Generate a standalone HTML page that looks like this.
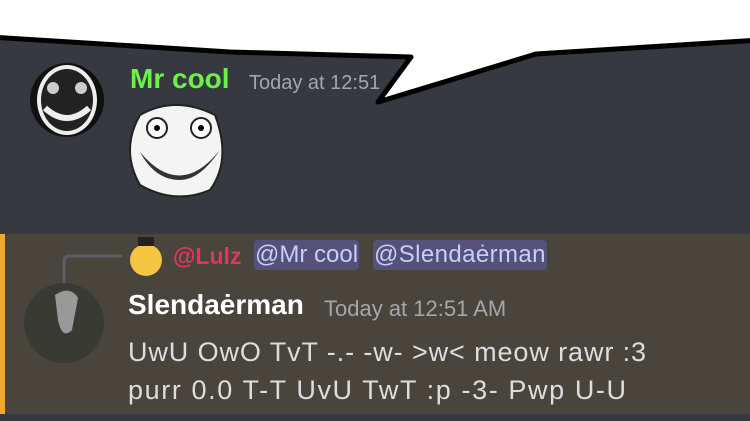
<!DOCTYPE html>
<html><head><style>
body{margin:0;width:750px;height:421px;overflow:hidden;background:#36393f;font-family:"Liberation Sans",sans-serif;position:relative}
.a{position:absolute;white-space:nowrap}
</style></head><body>
<div class="a" style="left:0;top:234px;width:750px;height:180px;background:#49443c"></div>
<div class="a" style="left:0;top:234px;width:5px;height:180px;background:#f0a82c"></div>
<svg class="a" style="left:0;top:0" width="750" height="421">
<circle cx="67" cy="100" r="37" fill="#111"/>
<ellipse cx="67" cy="100" rx="30" ry="35" fill="#eee"/>
<ellipse cx="67" cy="100" rx="26" ry="31" fill="#222"/>
<circle cx="53" cy="88" r="6" fill="#ccc"/><circle cx="81" cy="88" r="6" fill="#ccc"/>
<path d="M45 108Q67 128 89 108" stroke="#eee" stroke-width="6" fill="none"/>
<path d="M140 115Q175 95 215 115Q232 160 210 190Q175 205 140 185Q120 150 140 115Z" fill="#f4f4f4" stroke="#222" stroke-width="2"/>
<circle cx="157" cy="128" r="10" fill="#fff" stroke="#222" stroke-width="2"/><circle cx="157" cy="128" r="3"/>
<circle cx="201" cy="128" r="10" fill="#fff" stroke="#222" stroke-width="2"/><circle cx="201" cy="128" r="3"/>
<path d="M140 152Q180 200 220 150Q200 180 180 180Q155 180 140 152Z" fill="#333"/>
<path d="M64 288V262Q64 256 70 256H122" stroke="#5c5f66" stroke-width="3" fill="none"/>
<circle cx="64" cy="323" r="40" fill="#3a3a34"/>
<path d="M55 295Q70 285 78 298L72 330Q62 340 58 320Z" fill="#999"/>
<circle cx="146" cy="260" r="16" fill="#f5c542"/><rect x="138" y="237" width="16" height="9" fill="#222"/>
</svg>
<div class="a" style="left:130px;top:63px;font-size:28px;font-weight:bold;color:#6cf04a">Mr cool</div>
<div class="a" style="left:249px;top:72px;font-size:20px;color:#a3a6aa">Today at 12:51</div>
<svg class="a" style="left:0;top:0" width="750" height="130">
<path d="M-10 -10H760V40L536 54L378 102L411 57L230 52L-10 37Z" fill="#fff" stroke="#000" stroke-width="5" stroke-linejoin="round"/>
</svg>
<div class="a" style="left:173px;top:243px;font-size:23px;font-weight:bold;color:#e0365f">@Lulz</div>
<div class="a" style="left:254px;top:240px;font-size:24px;color:#c9cdfb;background:#555178;border-radius:4px;padding:1px 1px">@Mr cool</div>
<div class="a" style="left:373px;top:240px;font-size:24px;letter-spacing:0.4px;color:#c9cdfb;background:#555178;border-radius:4px;padding:1px 1px">@Slendaėrman</div>
<div class="a" style="left:128px;top:289px;font-size:28px;font-weight:bold;color:#fff">Slendaėrman</div>
<div class="a" style="left:324px;top:296px;font-size:22px;color:#a3a6aa">Today at 12:51 AM</div>
<div class="a" style="left:128px;top:333px;font-size:27px;letter-spacing:0.9px;color:#dcddde;line-height:38px">UwU OwO TvT -.- -w- &gt;w&lt; meow rawr :3<br><span style="letter-spacing:1.6px">purr 0.0 T-T UvU TwT :p -3- Pwp U-U</span></div>
</body></html>
